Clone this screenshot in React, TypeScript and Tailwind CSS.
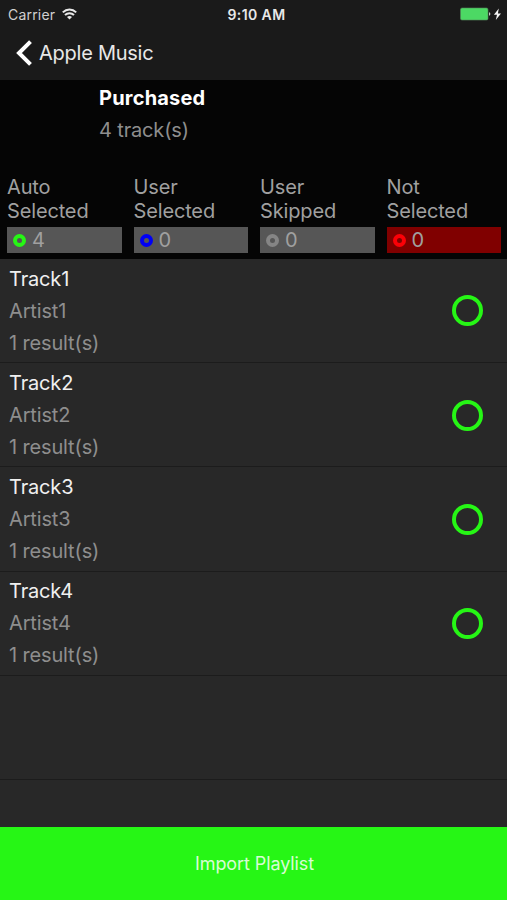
import { useState } from 'react'

interface Track {
  title: string
  artist: string
  results: number
}

interface Counter {
  label: [string, string]
  count: number
  box: string
  ring: string
}

const tracks: Track[] = [
  { title: 'Track1', artist: 'Artist1', results: 1 },
  { title: 'Track2', artist: 'Artist2', results: 1 },
  { title: 'Track3', artist: 'Artist3', results: 1 },
  { title: 'Track4', artist: 'Artist4', results: 1 },
]

const counters: Counter[] = [
  { label: ['Auto', 'Selected'], count: 4, box: 'bg-[#565656]', ring: 'border-[#26f615]' },
  { label: ['User', 'Selected'], count: 0, box: 'bg-[#565656]', ring: 'border-[#0000f5]' },
  { label: ['User', 'Skipped'], count: 0, box: 'bg-[#565656]', ring: 'border-[#858585]' },
  { label: ['Not', 'Selected'], count: 0, box: 'bg-[#800000]', ring: 'border-[#fb0007]' },
]

function StatusBar() {
  return (
    <div className="grid h-7 grid-cols-3 items-center pl-2 pr-[5px] text-[#e8e8e8]">
      <div className="flex items-center gap-[7px]">
        <span className="text-[14px] tracking-[0.2px] text-[#d0d0d0]">Carrier</span>
        <svg width="15" height="12" viewBox="0 0 15 12" fill="none" stroke="currentColor" strokeWidth="2">
          <path d="M0.8 4.4C4.6 0.6 10.4 0.6 14.2 4.4" />
          <path d="M3 7C5.5 4.6 9.5 4.6 12 7" />
          <path d="M7.5 11.4L5 8.9C6.4 7.6 8.6 7.6 10 8.9Z" fill="currentColor" stroke="none" />
        </svg>
      </div>
      <span className="pl-[3px] text-center text-[14px] font-semibold tracking-[0.4px]">9:10 AM</span>
      <div className="flex items-center justify-end">
        <svg width="42" height="14" viewBox="0 0 42 14">
          <rect x="0.5" y="1" width="27.5" height="12" rx="1.5" fill="#4cd964" stroke="#55895d" strokeWidth="0.6" />
          <path d="M29 5.3C30.8 5.6 30.8 8.4 29 8.7Z" fill="#c8c8c8" />
          <path d="M38.8 1.4L33.9 7.8H37L35.8 13L41 6.4H37.9Z" fill="#f4f4f4" />
        </svg>
      </div>
    </div>
  )
}

export default function App() {
  const [selected, setSelected] = useState<string[]>(tracks.map((t) => t.title))

  const toggle = (title: string) => {
    setSelected((prev) => (prev.includes(title) ? prev.filter((t) => t !== title) : [...prev, title]))
  }

  return (
    <div className="flex h-[900px] w-[507px] flex-col overflow-hidden bg-[#282828] font-['Inter',sans-serif] text-[20px] tracking-[-0.15px] text-[#8e8e8e]">
      <header className="h-20 shrink-0 bg-[#1a1a1a]">
        <StatusBar />
        <button className="flex h-[49px] items-center pl-[15px] text-[#e8e8e8]">
          <svg width="18" height="26" viewBox="0 0 18 26" fill="none" stroke="#ffffff" strokeWidth="4">
            <path d="M15.5 1.6L4 13L15.5 24.4" />
          </svg>
          <span className="pl-1.5 tracking-[-0.25px]">Apple Music</span>
        </button>
      </header>

      {/* Playlist summary */}
      <section className="flex h-[179px] shrink-0 flex-col bg-[#050505] pt-1">
        <div className="pl-[99px]">
          <h1 className="h-[30px] font-bold leading-7 tracking-[0.2px] text-white">Purchased</h1>
          <p className="leading-8">4 track(s)</p>
        </div>
        <div className="mt-auto grid grid-cols-4 gap-[12px] pb-1.5 pl-[7px] pr-1.5 text-[#a0a0a0]">
          {counters.map((c) => (
            <div key={c.label.join(' ')}>
              <p className="pb-1 leading-6">
                {c.label[0]}
                <br />
                {c.label[1]}
              </p>
              <div className={`flex h-[26px] items-center gap-1.5 pl-1.5 ${c.box}`}>
                <span className={`size-[13px] rounded-full border-4 ${c.ring}`} />
                <span>{c.count}</span>
              </div>
            </div>
          ))}
        </div>
      </section>

      {/* Track list, blank rows fill the space under the last track */}
      <ul className="flex-1 overflow-hidden">
        {tracks.map((t) => (
          <li
            key={t.title}
            className="flex h-[104.2px] items-center justify-between border-b border-[#1c1c1c] pl-[9px] pr-6 pt-[0.6px]"
          >
            <div className="leading-8">
              <p className="text-[#f0f0f0]">{t.title}</p>
              <p>{t.artist}</p>
              <p>{t.results} result(s)</p>
            </div>
            <button
              aria-label={t.title}
              onClick={() => toggle(t.title)}
              className={`size-[31px] rounded-full border-4 ${selected.includes(t.title) ? 'border-[#26f615]' : 'border-[#858585]'}`}
            />
          </li>
        ))}
        <li className="h-[104.2px] border-b border-[#1c1c1c]" />
      </ul>

      <button className="h-[73px] shrink-0 bg-[#26f615] pl-0.5 text-[18px] tracking-[-0.1px] text-[#d8fdd5]">
        Import Playlist
      </button>
    </div>
  )
}
